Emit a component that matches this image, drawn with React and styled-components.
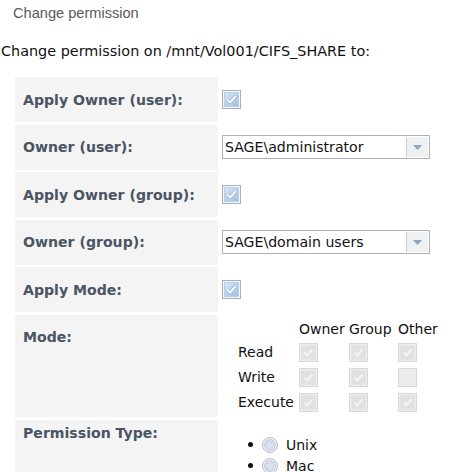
import React from "react";
import styled, { createGlobalStyle } from "styled-components";

const Global = createGlobalStyle`
  html, body { margin: 0; padding: 0; background: #fff; }
  body { font-family: "DejaVu Sans", Verdana, sans-serif; font-size: 14px; color: #111; }
`;

const Page = styled.div`
  padding-top: 4px;
`;

const Title = styled.div`
  font-family: "Liberation Sans", Arial, sans-serif;
  font-size: 14.6px;
  line-height: 18px;
  color: #595959;
  padding-left: 13px;
`;

const Intro = styled.div`
  margin-top: 19.5px;
  font-size: 14.4px;
  line-height: 18px;
  color: #111;
  padding-left: 1px;
`;

const Form = styled.div`
  display: flex;
  flex-direction: column;
  gap: 2.5px;
  margin: 17.5px 0 0 15px;
`;

const Row = styled.div`
  display: grid;
  grid-template-columns: 203px 1fr;
  min-height: 45px;
`;

const Label = styled.div`
  background: #f4f4f4;
  padding: ${(p) => p.$top ?? 13.5}px 8px 0;
  font-weight: bold;
  font-size: 14.1px;
  line-height: 18px;
  color: #4a5563;
`;

const Value = styled.div`
  display: flex;
  align-items: ${(p) => (p.$top ? "flex-start" : "center")};
  padding-left: 4px;
`;

const Box = styled.svg`
  display: block;
  width: 19px;
  height: 19px;
  flex: none;
`;

function Checkbox({ checked = true, disabled = false }) {
  if (disabled) {
    return (
      <Box viewBox="0 0 19 19">
        <rect x="0.5" y="0.5" width="18" height="18" fill="#efefef" stroke="#d8d8d8" />
        <rect x="2" y="2" width="15" height="15" fill={checked ? "#e1e1e1" : "#ededed"} stroke="#e9e9e9" />
        {checked && (
          <polyline points="5.5,9.5 8.3,12.3 13.6,6.2" fill="none" stroke="#f3f3f3" strokeWidth="2.2" />
        )}
      </Box>
    );
  }
  return (
    <Box viewBox="0 0 19 19">
      <defs>
        <linearGradient id="cbFill" x1="0" y1="0" x2="1" y2="1">
          <stop offset="0" stopColor="#d6e6f6" />
          <stop offset="1" stopColor="#9dbfe2" />
        </linearGradient>
      </defs>
      <rect x="0.5" y="0.5" width="18" height="18" fill="#f4f7fb" stroke="#a3afc2" />
      <rect x="2.5" y="2.5" width="14" height="14" fill="url(#cbFill)" stroke="#b9cde4" />
      <polyline points="5.3,9.6 8.2,12.5 13.8,6" fill="none" stroke="#7fa3cc" strokeWidth="3" strokeLinejoin="round" />
      <polyline points="5.3,9.6 8.2,12.5 13.8,6" fill="none" stroke="#ffffff" strokeWidth="2" strokeLinejoin="round" />
    </Box>
  );
}

const Select = styled.div`
  display: flex;
  width: 208px;
  height: 24px;
  box-sizing: border-box;
  border: 1px solid #a9b1bd;
  background: #fff;
`;

const SelectText = styled.div`
  flex: 1;
  padding-left: 2px;
  font-size: 14.1px;
  line-height: 22px;
  color: #111;
  white-space: nowrap;
`;

const ArrowButton = styled.div`
  width: 21px;
  margin: 1px 1px 1px 0;
  border-left: 1px solid #c9cfd9;
  background: #eff0f2;
  display: flex;
  align-items: center;
  justify-content: center;
`;

function Dropdown({ value }) {
  return (
    <Select>
      <SelectText>{value}</SelectText>
      <ArrowButton>
        <svg width="9" height="5" viewBox="0 0 9 5">
          <polygon points="0,0 9,0 4.5,5" fill="#8fa5c8" />
        </svg>
      </ArrowButton>
    </Select>
  );
}

const ModeGrid = styled.div`
  display: grid;
  grid-template-columns: 61px 50px 49px auto;
  grid-template-rows: 17px 19px 19px 19px;
  row-gap: 6px;
  margin: 5px 0 5.5px 16px;
  font-size: 14px;
  color: #111;
`;

const Head = styled.div`
  line-height: 18px;
  white-space: nowrap;
`;

const RowName = styled.div`
  line-height: 19px;
`;

const Options = styled.ul`
  list-style: none;
  margin: 0;
  padding: 14.5px 0 14px 25.5px;
`;

const Option = styled.li`
  display: flex;
  align-items: center;
  height: 21px;
  font-size: 14px;
  color: #111;
`;

const Dot = styled.span`
  width: 5px;
  height: 5px;
  border-radius: 50%;
  background: #111;
  margin-right: 9.5px;
`;

const Radio = styled.span`
  width: 16px;
  height: 16px;
  box-sizing: border-box;
  border-radius: 50%;
  border: 1px solid #b7bcc4;
  background: radial-gradient(circle, #dfe7f1 0, #cfdbe9 48%, #b9c7d8 54%, #f3f5f7 62%, #e6e9ed 100%);
  margin-right: 8px;
`;

const modeRows = [
  ["Read", [true, true, true]],
  ["Write", [true, true, false]],
  ["Execute", [true, true, true]],
];

export default function App() {
  return (
    <Page>
      <Global />
      <Title>Change permission</Title>
      <Intro>Change permission on /mnt/Vol001/CIFS_SHARE to:</Intro>
      <Form>
        <Row>
          <Label>Apply Owner (user):</Label>
          <Value><Checkbox /></Value>
        </Row>
        <Row>
          <Label>Owner (user):</Label>
          <Value><Dropdown value="SAGE\administrator" /></Value>
        </Row>
        <Row>
          <Label>Apply Owner (group):</Label>
          <Value><Checkbox /></Value>
        </Row>
        <Row>
          <Label>Owner (group):</Label>
          <Value><Dropdown value="SAGE\domain users" /></Value>
        </Row>
        <Row>
          <Label>Apply Mode:</Label>
          <Value><Checkbox /></Value>
        </Row>
        <Row>
          <Label>Mode:</Label>
          <Value $top>
            <ModeGrid>
              <span />
              <Head>Owner</Head>
              <Head>Group</Head>
              <Head>Other</Head>
              {modeRows.map(([name, flags]) => (
                <React.Fragment key={name}>
                  <RowName>{name}</RowName>
                  {flags.map((f, i) => (
                    <Checkbox key={i} disabled checked={f} />
                  ))}
                </React.Fragment>
              ))}
            </ModeGrid>
          </Value>
        </Row>
        <Row>
          <Label $top={4}>Permission Type:</Label>
          <Value $top>
            <Options>
              <Option><Dot /><Radio />Unix</Option>
              <Option><Dot /><Radio />Mac</Option>
            </Options>
          </Value>
        </Row>
      </Form>
    </Page>
  );
}
